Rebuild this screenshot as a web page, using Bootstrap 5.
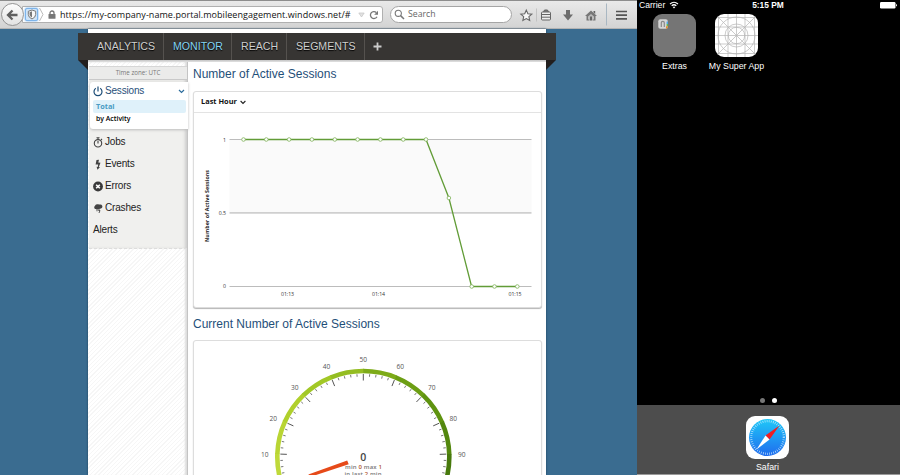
<!DOCTYPE html>
<html lang="en">
<head>
<meta charset="utf-8">
<title>Monitor - Sessions</title>
<link href="https://cdn.jsdelivr.net/npm/bootstrap@5.3.0/dist/css/bootstrap.min.css" rel="stylesheet">
<style>
body{width:900px;height:475px;overflow:hidden;font-family:"Liberation Sans",Arial,sans-serif;line-height:1;background:#000}
svg{display:block;flex:none}
.ui-font{font-family:"Open Sans","Noto Sans",sans-serif}
.browser{width:637px;height:475px;background:#3a6c90}
.toolbar{height:29px;background:linear-gradient(#e9e9e9,#d3d3d3);border-top:1px solid #8d8d8d;border-bottom:1px solid #b3b3b3;padding-left:1px}
.back-btn{width:23px;height:23px;border:1px solid #949494;background:linear-gradient(#fdfdfd,#e2e2e2);z-index:1}
.url-box{width:361px;height:17px;margin-left:-2px;border:1px solid #b0b0b0;border-radius:0 3px 3px 0;background:#fff;font-size:9px;letter-spacing:.05px;color:#111;font-weight:500}
.url-text{width:294px;white-space:nowrap;margin-left:4px}
.shield{width:13px;height:13px;margin-left:2px;background:#cfe4f8;border:1px solid #7db4ea;border-radius:2px;box-shadow:0 0 2px #4a9ae8}
.search-box{width:122px;height:17px;margin-left:7px;border:1px solid #a5a5a5;border-radius:9px;background:#fff;font-size:8.7px;color:#666;padding-left:3px}
.page{width:458px;height:446px;margin-left:88px;background:#fff;padding-top:4px;box-shadow:0 0 2px #1d405a}
.ribbon{width:478px;height:27px;margin-left:-10px;background:#373533;color:#cfcfcf;font-size:10.6px;padding-left:9px}
.ribbon .tab{height:27px;padding:0 9px 0 10px;border-right:1px solid #55524f;text-shadow:0 1px 1px #000;white-space:nowrap}
.ribbon .tab.on{color:#85d5f3}
.fold{width:10px;height:10px;background:#221f1e}
.fold-l{clip-path:polygon(0 0,100% 0,100% 100%)}
.fold-r{clip-path:polygon(0 0,100% 0,0 100%)}
.folds{width:478px;height:10px;margin:0 0 -10px -10px}
.under{height:2px;background:linear-gradient(#c4c4c4,#e2e2e2)}
.hatch{background:repeating-linear-gradient(135deg,#fff 0 2px,#f6f6f6 2px 3px)}
.side{width:100px;height:414px;padding-left:1px;border-right:1px solid #c4c4c4;box-shadow:inset -2px 0 2px #ddd}
.zone{height:14px;margin-top:4px;background:#ebebea;border-top:1px solid #d6d6d6;border-bottom:1px solid #c9c9c9;font-size:6.2px;color:#777}
.menu{background:#f0f0ee;height:169px;border-bottom:1px dashed #ddd;font-size:10px;letter-spacing:-.18px;color:#222;padding-top:2px;box-shadow:inset -3px 0 3px -1px #ccc}
.active-box{background:#fff;margin-left:1px;height:47px;width:98px;border-radius:3px 0 0 3px;box-shadow:0 1px 3px #bbb;padding:2px 3px 0 3px;margin-bottom:2px}
.active-box .top{height:14px;color:#1f4f79}
.sub{height:13px;font-size:6.9px;letter-spacing:0;font-weight:600;padding-left:3px;width:93px;border-radius:2px}
.sub.sel{background:#dff1fa;color:#4a9cc4;font-weight:700;font-size:7.3px;margin-top:2px}
.entry{height:22px;padding-left:4px}
.ico{width:12px;height:11px}
.main{width:349px;margin-left:5px}
h2.title{font-size:12px;color:#1f4f79;line-height:14px;white-space:nowrap}
.panel{border:1px solid #ddd;border-radius:3px;background:#fff;box-shadow:0 1px 1px #b5b5b5}
.panel-top{height:21px;border-bottom:1px solid #e3e3e3;font-size:7.4px;font-weight:700;color:#111;padding-left:7px;gap:3px}
.phone{width:263px;height:475px;background:#000;color:#fff}
.status{height:10px;font-size:8.6px;padding-left:2px}
.status > div{width:86px}
.app{width:62px;font-size:8.8px;white-space:nowrap}
.app .tile{width:43px;height:43px;border-radius:9px;margin-bottom:5px}
.dock{height:70px;background:#4d4d4d;border-bottom:1px solid #9a9a9a;padding:11px 2px 0 0}
.dot{width:5px;height:5px;border-radius:50%;background:#777}
</style>
</head>
<body class="d-flex">
<div class="browser flex-shrink-0">
  <div class="toolbar d-flex align-items-center ui-font">
    <div class="back-btn rounded-circle d-flex align-items-center justify-content-center flex-shrink-0">
      <svg width="13" height="12" viewBox="0 0 13 12"><path d="M6.500 1.500L2 6l4.500 4.500M2.500 6H11.500" fill="none" stroke="#5f5f5f" stroke-width="2.300"/></svg>
    </div>
    <div class="url-box d-flex align-items-center flex-shrink-0">
      <div class="shield d-flex align-items-center justify-content-center flex-shrink-0"><svg width="10" height="11" viewBox="0 0 10 11"><path d="M5 1L8.700 2.300V5.500Q8.500 8.500 5 10 1.500 8.500 1.300 5.500V2.300Z" fill="#f7f7f7" stroke="#777"/><path d="M5 2.300V8.600Q2.800 7.500 2.600 5.400V3.200Z" fill="#777"/></svg></div>
      <svg width="7" height="15" viewBox="0 0 7 15"><path d="M1.500 1L5 7.500L1.500 14" fill="none" stroke="#bbb"/></svg>
      <svg style="margin-left:3px" width="8" height="9" viewBox="0 0 8 9"><path d="M2 4.500V3a2 2 0 0 1 4 0v1.500" fill="none" stroke="#777" stroke-width="1.300"/><rect x=".5" y="4" width="7" height="4.800" rx=".5" fill="#777"/></svg>
      <div class="url-text">https://my-company-name.portal.mobileengagement.windows.net/#</div>
      <svg class="ms-1" width="7" height="6" viewBox="0 0 7 6"><path d="M.8 1H6.200L3.500 5Z" fill="#e2e2e2" stroke="#c4c4c4" stroke-width=".7"/></svg>
      <svg style="margin-left:4px" width="10" height="10" viewBox="0 0 10 10"><path d="M8 6.800A3.500 3.500 0 1 1 7.300 2.500" fill="none" stroke="#777" stroke-width="1.300"/><path d="M9 .8V4.700H5.200Z" fill="#777"/></svg>
    </div>
    <div class="search-box d-flex align-items-center flex-shrink-0">
      <svg width="11" height="11" viewBox="0 0 11 11"><circle cx="4.300" cy="4.300" r="3.100" fill="none" stroke="#777" stroke-width="1.100"/><path d="M6.600 6.600L10 10" stroke="#777" stroke-width="1.500"/></svg>
      <span style="margin-left:3px">Search</span>
    </div>
    <svg width="125" height="26" viewBox="512 1.500 125 26"><path d="M526.300 9.600l1.600 3.600 3.900.4-2.900 2.600.8 3.800-3.400-1.900-3.400 1.900.8-3.800-2.900-2.600 3.900-.4z" fill="#f7f7f7" stroke="#666" stroke-width="1.100"/><path d="M536.500 8V21" stroke="#c3c3c3"/><rect x="541.500" y="11.500" width="9" height="8" rx="1" fill="#eee" stroke="#666"/><path d="M543.500 11.500l1-2h3l1 2M541 14h10M541 16.700h10" stroke="#666" fill="#777"/><path d="M566 9.500h4V14h3l-5 6-5-6h3z" fill="#6d6d6d"/><path d="M591 10l6 5.500h-1.500V20H592.500v-3h-3v3H586.500V15.500H585z" fill="#777"/><path d="M591 13.500l3 2.500v3h-6v-3z" fill="#bbb"/><path d="M590 16h2v4h-2zM593.500 10.500h1.700v3l-1.700-1.600z" fill="#666"/><path d="M606.500 3V25" stroke="#a9b7c2"/><path d="M616 11h11M616 14.700h11M616 18.400h11" stroke="#555" stroke-width="1.700"/></svg>
  </div>

  <div class="page">
    <div class="ribbon d-flex align-items-center">
      <div class="tab d-flex align-items-center" style="width:77px">ANALYTICS</div>
      <div class="tab on d-flex align-items-center" style="width:68px;padding-left:9px">MONITOR</div>
      <div class="tab d-flex align-items-center" style="width:55px;padding-left:9px">REACH</div>
      <div class="tab d-flex align-items-center" style="width:78px;padding-left:9px">SEGMENTS</div>
      <svg style="margin-left:8px" width="9" height="9" viewBox="0 0 9 9"><path d="M4.500.5v8M.5 4.500h8" stroke="#ccc" stroke-width="1.800"/></svg>
    </div>
    <div class="folds d-flex justify-content-between"><div class="fold fold-l"></div><div class="fold fold-r"></div></div>
    <div class="under"></div>
    <div class="d-flex">
      <div class="side hatch flex-shrink-0">
        <div class="zone ui-font d-flex align-items-center justify-content-center">Time zone: UTC</div>
        <div class="menu">
          <div class="active-box">
            <div class="top d-flex align-items-center">
              <svg width="12" height="11" viewBox="0 0 12 11"><path d="M2.800 2.300A4 4 0 1 0 7.200 2.300M5 .5V5.500" fill="none" stroke="#1f4f79" stroke-width="1.200"/></svg>
              <span class="flex-grow-1">Sessions</span>
              <svg width="7" height="5" viewBox="0 0 7 5"><path d="M1 1L3.500 3.500L6 1" fill="none" stroke="#2c6c9c" stroke-width="1.200"/></svg>
            </div>
            <div class="sub sel ui-font d-flex align-items-center">Total</div>
            <div class="sub ui-font d-flex align-items-center text-black">by Activity</div>
          </div>
          <div class="entry d-flex align-items-center"><svg class="ico" viewBox="0 0 12 11"><circle cx="5" cy="6.300" r="3.700" fill="none" stroke="#444" stroke-width="1.100"/><path d="M3.500.8h3M5 1v2M5 6.500V4M8 2l1 1" stroke="#444" stroke-width="1.100"/></svg>Jobs</div>
          <div class="entry d-flex align-items-center"><svg class="ico" viewBox="0 0 12 11"><path d="M3.500 1L6 .7 5.300 3.500 7.500 3.700 5.800 8H7L4.500 10.700 3.600 7.700 4.700 7.900 5.200 5.500 2.600 5.600Z" fill="#444"/></svg>Events</div>
          <div class="entry d-flex align-items-center"><svg class="ico" viewBox="0 0 12 11"><circle cx="5" cy="5.500" r="4.900" fill="#3a3a3a"/><path d="M3.200 3.700L6.800 7.300M6.800 3.700L3.200 7.300" stroke="#fff" stroke-width="1.600"/></svg>Errors</div>
          <div class="entry d-flex align-items-center"><svg class="ico" viewBox="0 0 12 11"><path d="M2.200 6A2 2 0 0 1 2 2.700 3 2.200 0 0 1 6.500 1.600 2 2 0 0 1 8 5.500L5 6.200Z" fill="#444"/><path d="M4 6v2.300M6.300 5.700L5.600 7.500H7L6 10" fill="none" stroke="#444" stroke-width=".9"/></svg>Crashes</div>
          <div class="entry d-flex align-items-center">Alerts</div>
        </div>
      </div>

      <div class="main">
        <h2 class="title mb-0" style="padding-top:5px;height:29px">Number of Active Sessions</h2>
        <div class="panel" style="height:217px">
          <div class="panel-top ui-font d-flex align-items-center">Last Hour<svg width="6" height="5" viewBox="0 0 6 5"><path d="M.6 1L3 3.500L5.400 1" fill="none" stroke="#222" stroke-width="1.100"/></svg></div>
          <svg class="ui-font" width="347" height="194" viewBox="194 113 347 194">
            <rect x="229.500" y="140" width="302" height="72.500" fill="#fafafa"/>
            <path d="M229.500 139.500H531.500M229.500 286.500H531.500" stroke="#bcbcbc"/><path d="M229.500 212.800H531.500" stroke="#cfcfcf" stroke-width="1.700"/>
            <polyline points="243.500,139.500 426,139.500 448.900,198 471.600,286.500 517.200,286.500" fill="none" stroke="#629c37" stroke-width="1.300"/>
            <g fill="#fff" stroke="#80b25a" stroke-width=".8"><circle cx="243.500" cy="139.500" r="1.800"/><circle cx="266.300" cy="139.500" r="1.800"/><circle cx="289.100" cy="139.500" r="1.800"/><circle cx="311.900" cy="139.500" r="1.800"/><circle cx="334.800" cy="139.500" r="1.800"/><circle cx="357.600" cy="139.500" r="1.800"/><circle cx="380.400" cy="139.500" r="1.800"/><circle cx="403.200" cy="139.500" r="1.800"/><circle cx="426" cy="139.500" r="1.800"/><circle cx="448.900" cy="198" r="1.800"/><circle cx="471.700" cy="286.500" r="1.800"/><circle cx="494.500" cy="286.500" r="1.800"/><circle cx="517.300" cy="286.500" r="1.800"/></g>
            <g font-size="5.200" fill="#333" font-weight="500"><text x="226" y="141.500" text-anchor="end">1</text><text x="226" y="214.800" text-anchor="end">0.5</text><text x="226" y="288.300" text-anchor="end">0</text>
            <text x="281" y="295.700" textLength="13">01:13</text><text x="372" y="295.700" textLength="13">01:14</text><text x="508.500" y="295.700" textLength="13">01:15</text></g>
            <text transform="translate(208.500 242) rotate(-90)" font-size="5.300" font-weight="700" fill="#222" textLength="72">Number of Active Sessions</text>
          </svg>
        </div>
        <h2 class="title mb-0" style="padding-top:9px;height:32px">Current Number of Active Sessions</h2>
        <div class="panel" style="height:150px">
          <svg id="gauge" class="ui-font" width="347" height="134" viewBox="194 341 347 134"></svg>
        </div>
      </div>
    </div>
  </div>
</div>

<div class="phone flex-shrink-0 d-flex flex-column">
  <div class="status d-flex align-items-center">
    <div class="d-flex align-items-center"><span>Carrier</span><svg class="ms-1" width="10" height="8" viewBox="0 0 10 8"><path d="M1 3Q5-.5 9 3M2.700 4.800Q5 2.700 7.300 4.800" fill="none" stroke="#fff" stroke-width="1.200"/><path d="M5 7.500L3.700 6Q5 5 6.300 6Z" fill="#fff"/></svg></div>
    <div class="text-center fw-bold" style="font-size:8.400px">5:15 PM</div>
    <div class="d-flex justify-content-end"><svg width="18" height="8" viewBox="0 0 18 8"><rect x="1" y="1" width="15.500" height="6.500" rx="1.200" fill="#fff"/><path d="M17 3v2.500q1-.2 1-1.200t-1-1.300" fill="#fff"/></svg></div>
  </div>
  <div class="d-flex" style="padding:4px 0 0 6.500px">
    <div class="app d-flex flex-column align-items-center">
      <div class="tile" style="background:#757575"><svg width="43" height="43" viewBox="0 0 43 43"><rect x="5.300" y="5.300" width="9.500" height="9.500" rx="2" fill="#d6d6d6"/><path d="M8.300 13V8.800q0-1.500 1.500-1.500t1.500 1.500V13" fill="none" stroke="#8a8a8a" stroke-width="1.200"/><path d="M13.600 7.500h1.400v2.500h-1.400z" fill="#4aa8e8"/><path d="M13.600 10h1.400v2.300h-1.400z" fill="#64bd4a"/><path d="M13 12.300h2l-.8 2.300h-1.200z" fill="#f08b24"/></svg></div>Extras
    </div>
    <div class="app d-flex flex-column align-items-center">
      <div class="tile bg-white overflow-hidden"><svg width="43" height="43" viewBox="0 0 43 43" fill="none" stroke="#b4b4b4" stroke-width=".7"><path d="M3.500 0V43M13 0V43M21.500 0V43M30 0V43M39.500 0V43M0 3.500H43M0 13H43M0 21.500H43M0 30H43M0 39.500H43M2 2L41 41M41 2L2 41"/><circle cx="21.500" cy="21.500" r="18.500"/><circle cx="21.500" cy="21.500" r="11.500"/><circle cx="21.500" cy="21.500" r="8.200"/></svg></div>My Super App
    </div>
  </div>
  <div class="mt-auto d-flex justify-content-center" style="gap:7px;margin-bottom:2.500px;padding-right:1px"><i class="dot"></i><i class="dot bg-white"></i></div>
  <div class="dock d-flex justify-content-center">
    <div class="app d-flex flex-column align-items-center">
      <div class="tile bg-white" style="margin-bottom:4px"><svg width="43" height="43" viewBox="0 0 43 43"><defs><linearGradient id="sky" x2="0" y2="1"><stop stop-color="#1fc8f8"/><stop offset="1" stop-color="#1f6cee"/></linearGradient></defs><circle cx="21.500" cy="21.500" r="18.500" fill="url(#sky)"/><circle cx="21.500" cy="21.500" r="16.300" fill="none" stroke="#d5f0ff" stroke-width="2.200" stroke-dasharray=".6 1.500"/><path d="M33.500 9.500L19.500 19.500L23.500 23.500Z" fill="#f11d22"/><path d="M10.500 33.500L19.500 19.500L23.500 23.500Z" fill="#fff"/></svg></div>Safari
    </div>
  </div>
</div>

<script>
// Session gauge: 22 degrees per ten units, starting at -110 degrees from the top
const cx = 363.3, cy = 457;
const at = (v, r) => {
  const a = (v * 2.2 - 110) * Math.PI / 180;
  return (cx + r * Math.sin(a)).toFixed(2) + ' ' + (cy - r * Math.cos(a)).toFixed(2);
};
const shades = ['#bfd93a', '#b9d534', '#b0d02c', '#a2c826', '#94bd22', '#7dab18', '#6c9e14', '#5f9310', '#53870e', '#47790c'];
let out = '';
shades.forEach((c, i) => {
  out += `<path d="M${at(i * 10, 86)}A86 86 0 0 1 ${at(i * 10 + 10.2, 86)}" fill="none" stroke="${c}" stroke-width="4.600"/>`;
});
for (let v = 0; v <= 100; v += 2) {
  const major = v % 10 === 0;
  out += `<path d="M${at(v, 83)}L${at(v, major ? 76.5 : 80.5)}" stroke="#555" stroke-width="${major ? 1 : .8}"/>`;
  if (major && v > 0 && v < 100) {
    const [x, y] = at(v, 98.5).split(' ');
    out += `<text x="${x}" y="${+y + 3.6}" font-size="6.600" fill="#555" text-anchor="middle">${v}</text>`;
  }
}
out += `<text x="363.200" y="461.300" font-size="10.500" font-weight="600" fill="#444" text-anchor="middle">0</text>
<g font-size="6" font-weight="600" fill="#777"><text x="345" y="469.200" textLength="37">min <tspan fill="#b0562e">0</tspan> max <tspan fill="#b0562e">1</tspan></text>
<text x="344.500" y="476" textLength="37">in last <tspan fill="#b0562e">2</tspan> min</text></g>
<path d="M347.200 460.500L348.700 464.300L313 476L306 477.500L309 474.200Z" fill="#e64a19"/>`;
document.getElementById('gauge').innerHTML = out;
</script>
<script src="https://cdn.jsdelivr.net/npm/bootstrap@5.3.0/dist/js/bootstrap.bundle.min.js"></script>
</body>
</html>
